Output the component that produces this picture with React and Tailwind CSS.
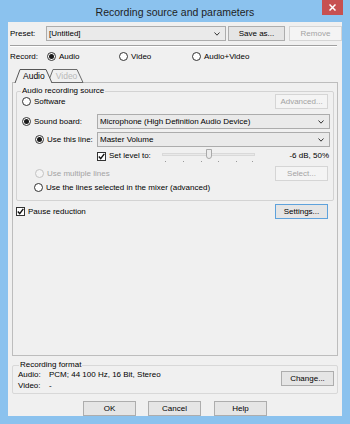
import React from 'react';

function Radio({ checked, disabled, label, className = '' }) {
  return (
    <div className={`flex items-center ${className}`}>
      <span
        className={`w-[9px] h-[9px] shrink-0 rounded-full border flex items-center justify-center ${
          disabled ? 'border-[#c2c2c2] bg-[#f4f4f4]' : 'border-[#333] bg-white'
        }`}
      >
        {checked && <span className="w-[5px] h-[5px] rounded-full bg-[#1b1b1b]" />}
      </span>
      <span className={`ml-[3px] whitespace-nowrap ${disabled ? 'text-[#a3a3a3]' : 'text-black'}`}>{label}</span>
    </div>
  );
}

function Check({ label, className = '' }) {
  return (
    <div className={`flex items-center ${className}`}>
      <span className="w-[9px] h-[9px] shrink-0 border border-[#333] bg-white flex items-center justify-center">
        <svg width="7" height="7" viewBox="0 0 7 7">
          <polyline points="0.8,3.6 2.7,5.6 6.3,0.9" fill="none" stroke="#111" strokeWidth="1.4" />
        </svg>
      </span>
      <span className="ml-[3px] whitespace-nowrap">{label}</span>
    </div>
  );
}

function Btn({ children, disabled, focus, className = '' }) {
  const tone = disabled
    ? 'bg-[#f4f4f4] border-[#d5d5d5] text-[#a3a3a3]'
    : focus
    ? 'bg-[#e5e5e5] border-[#5ea2dc] text-black'
    : 'bg-[#e5e5e5] border-[#adadad] text-black';
  return (
    <div className={`w-[53px] h-[15px] shrink-0 border flex items-center justify-center whitespace-nowrap ${tone} ${className}`}>
      {children}
    </div>
  );
}

function Combo({ value, className = '' }) {
  return (
    <div className={`h-[15px] shrink-0 border border-[#acacac] bg-[#eaeaea] flex items-center justify-between pl-[2px] pr-[5px] ${className}`}>
      <span className="whitespace-nowrap">{value}</span>
      <svg width="6" height="4" viewBox="0 0 6 4">
        <polyline points="0.5,0.5 3,3.2 5.5,0.5" fill="none" stroke="#333" strokeWidth="1" />
      </svg>
    </div>
  );
}

function Slider() {
  const ticks = [3, 21, 39, 56, 74, 90];
  return (
    <div className="relative w-[93px] h-[14px] shrink-0">
      <div className="absolute left-0 right-0 top-[4px] h-[3px] bg-[#e9e9e9] border border-[#d9d9d9]" />
      <div className="absolute left-[44px] top-0 w-[6px] h-[10px] bg-[#ececec] border border-[#a9a9a9] rounded-b-[3px]" />
      {ticks.map(t => (
        <div key={t} className="absolute top-[12px] w-px h-[1px] bg-[#9a9a9a]" style={{ left: t }} />
      ))}
    </div>
  );
}

export default function App() {
  return (
    <div className="w-[350px] h-[424px] bg-[#8bc2ee] flex flex-col font-['Liberation_Sans',Arial,sans-serif] text-[8px] leading-[10px] text-black overflow-hidden">
      {/* Title bar */}
      <div className="relative h-[22px] shrink-0 flex items-center justify-center pt-[1px]">
        <span className="text-[10.5px] leading-[12px] text-[#1e1e1e]">Recording source and parameters</span>
        <div className="absolute right-[7px] top-0 w-[21px] h-[15px] bg-[#c75050] flex items-center justify-center">
          <svg width="7" height="7" viewBox="0 0 7 7">
            <path d="M0.5 0.5 L6.5 6.5 M6.5 0.5 L0.5 6.5" stroke="#fff" strokeWidth="1.5" />
          </svg>
        </div>
      </div>

      {/* Client area */}
      <div className="mx-[8px] h-[394px] shrink-0 bg-[#f0f0f0] flex flex-col">
        {/* Preset */}
        <div className="mt-[4px] h-[15px] flex items-center pl-[2px]">
          <span className="w-[38px]">Preset:</span>
          <Combo value="[Untitled]" className="w-[180px]" />
          <Btn className="ml-[2px] w-[57px]">Save as...</Btn>
          <Btn disabled className="ml-[4px] w-[46px]">Remove</Btn>
        </div>

        <div className="mt-[4px] ml-[2px] w-[327px] h-[2px] border-t border-[#a0a0a0] border-b border-b-white" />

        {/* Record */}
        <div className="mt-[4px] h-[11px] flex items-center pl-[2px]">
          <span className="w-[37px]">Record:</span>
          <Radio checked label="Audio" className="w-[72px]" />
          <Radio label="Video" className="w-[73px]" />
          <Radio label="Audio+Video" />
        </div>

        {/* Tabs */}
        <div className="relative z-10 mt-[6px] -mb-px ml-[4px] w-[326px] h-[15px]">
          <svg className="absolute left-0 top-0" width="80" height="15" viewBox="0 0 80 15">
            <polygon points="36,14.5 41,1.5 65,1.5 71,14.5" fill="#f0f0f0" stroke="#6b6b6b" strokeWidth="1" />
            <polygon points="3,15 8,1.5 34,1.5 40,15" fill="#f0f0f0" stroke="none" />
            <polyline points="3,15 8,1.5 34,1.5 40,15" fill="none" stroke="#555" strokeWidth="1" />
          </svg>
          <div className="relative flex pt-[3px]">
            <span className="ml-[11px] text-[8.5px]">Audio</span>
            <span className="ml-[11px] text-[8.5px] text-[#b8b8b8]">Video</span>
          </div>
        </div>

        {/* Tab panel */}
        <div className="ml-[4px] w-[326px] h-[274px] shrink-0 border border-[#bdbdbd] flex flex-col">
          <div className="relative mt-[8px] ml-[3px] w-[318px] h-[110px] shrink-0 border border-[#d3d3d3] rounded-[2px] flex flex-col">
            <span className="absolute left-[4px] -top-[6px] px-[1px] bg-[#f0f0f0]">Audio recording source</span>

            <div className="mt-[3px] h-[13px] flex items-center justify-between pl-[5px] pr-[5px]">
              <Radio label="Software" />
              <Btn disabled>Advanced...</Btn>
            </div>

            <div className="mt-[6px] h-[15px] flex items-center pl-[5px]">
              <Radio checked label="Sound board:" className="w-[75px]" />
              <Combo value="Microphone (High Definition Audio Device)" className="w-[233px]" />
            </div>

            <div className="mt-[3px] h-[15px] flex items-center pl-[18px]">
              <Radio checked label="Use this line:" className="w-[62px]" />
              <Combo value="Master Volume" className="w-[233px]" />
            </div>

            <div className="mt-[2px] h-[14px] flex items-center pl-[80px] pr-[4px]">
              <Check label="Set level to:" className="w-[65px]" />
              <Slider />
              <span className="flex-1 text-right">-6 dB, 50%</span>
            </div>

            <div className="mt-[4px] h-[13px] flex items-center justify-between pl-[18px] pr-[5px]">
              <Radio disabled label="Use multiple lines" />
              <Btn disabled>Select...</Btn>
            </div>

            <div className="mt-[2px] h-[11px] flex items-center pl-[17px]">
              <Radio label="Use the lines selected in the mixer (advanced)" />
            </div>
          </div>

          <div className="mt-[3px] h-[15px] flex items-center justify-between pl-[3px] pr-[9px]">
            <Check label="Pause reduction" />
            <Btn focus>Settings...</Btn>
          </div>
        </div>

        {/* Recording format */}
        <div className="relative mt-[9px] ml-[4px] w-[326px] h-[29px] shrink-0 border border-[#d8d8d8] rounded-[2px] flex justify-between">
          <span className="absolute left-[6px] -top-[6px] px-[1px] bg-[#f0f0f0]">Recording format</span>
          <div className="mt-[3px] pl-[5px] flex flex-col leading-[11px]">
            <div className="flex">
              <span className="w-[31px]">Audio:</span>
              <span>PCM; 44 100 Hz, 16 Bit, Stereo</span>
            </div>
            <div className="flex">
              <span className="w-[31px]">Video:</span>
              <span>-</span>
            </div>
          </div>
          <Btn className="mt-[5px] mr-[3px]">Change...</Btn>
        </div>

        {/* Dialog buttons */}
        <div className="mt-[7px] h-[15px] flex pl-[75px]">
          <Btn>OK</Btn>
          <Btn className="ml-[12px]">Cancel</Btn>
          <Btn className="ml-[13px]">Help</Btn>
        </div>
      </div>
    </div>
  );
}
